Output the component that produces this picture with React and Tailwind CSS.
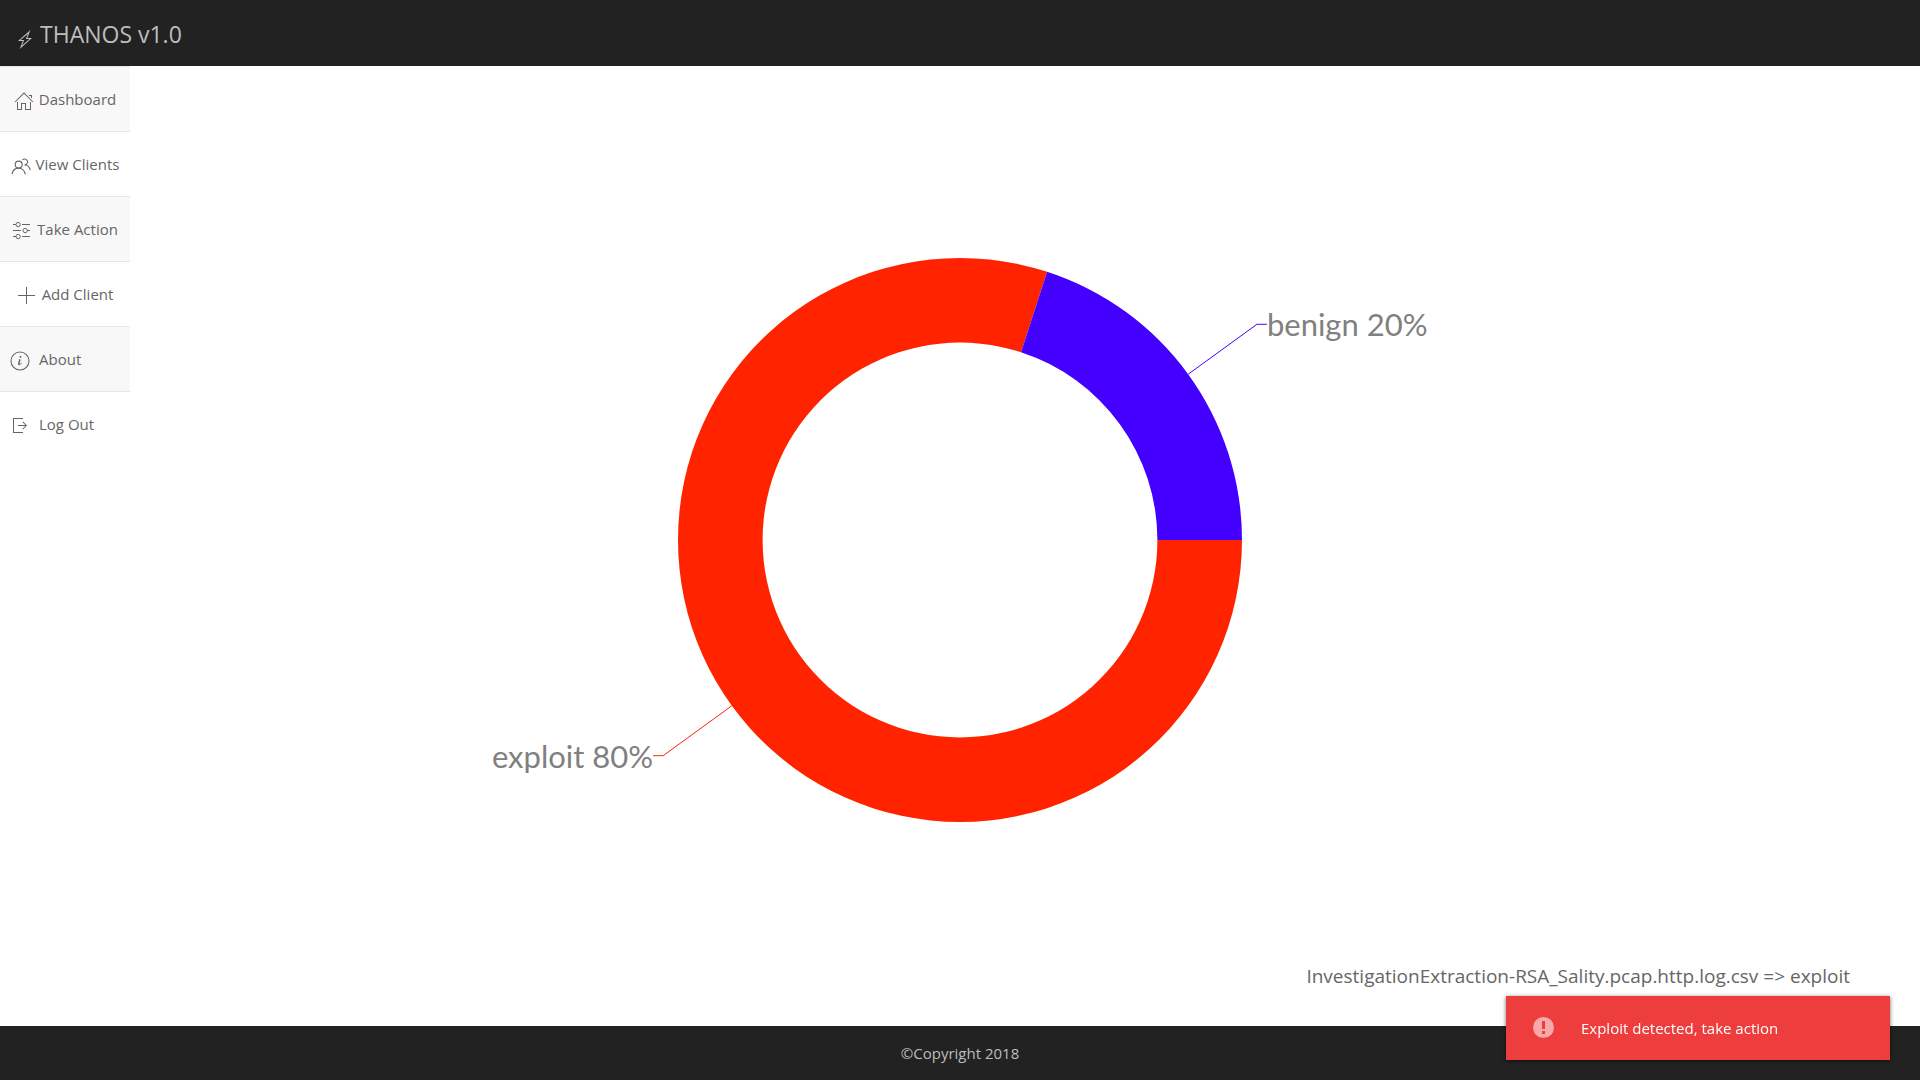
import React from "react";

function Icon({ children }) {
  return (
    <svg width="20" height="20" viewBox="0 0 20 20" fill="currentColor" className="shrink-0" aria-hidden="true">
      {children}
    </svg>
  );
}

const BoltIcon = () => (
  <Icon>
    <path d="M4.74,20 L7.73,12 L3,12 L15.43,1 L12.32,9 L17.02,9 L4.74,20 Z M9.18,11 L7.1,16.39 L14.47,10 L10.86,10 L12.99,4.67 L5.61,11 L9.18,11 Z" />
  </Icon>
);

const HomeIcon = () => (
  <Icon>
    <polygon points="18.65 11.35 10 2.71 1.35 11.35 0.65 10.65 10 1.29 19.35 10.65" />
    <polygon points="15 4 18 4 18 7 17 7 17 5 15 5" />
    <polygon points="3 11 4 11 4 18 7 18 7 12 12 12 12 18 16 18 16 11 17 11 17 19 11 19 11 13 8 13 8 19 3 19" />
  </Icon>
);

const UsersIcon = () => (
  <Icon>
    <g fill="none" stroke="currentColor" strokeWidth="1.1">
      <circle cx="7.7" cy="8.6" r="3.5" />
      <path d="M1,18.1 C1.7,14.6 4.4,12.1 7.6,12.1 C10.9,12.1 13.7,14.8 14.3,18.3" />
      <path d="M11.4,4 C12.8,2.4 15.4,2.8 16.3,4.7 C17.2,6.6 15.7,8.9 13.6,8.9 C16.5,8.9 18.8,11.3 19.2,14.1" />
    </g>
  </Icon>
);

const SettingsIcon = () => (
  <Icon>
    <g fill="none" stroke="currentColor">
      <ellipse cx="6.11" cy="3.55" rx="2.11" ry="2.15" />
      <ellipse cx="6.11" cy="15.55" rx="2.11" ry="2.15" />
      <circle cx="13.15" cy="9.55" r="2.15" />
    </g>
    <rect x="1" y="3" width="3" height="1" />
    <rect x="10" y="3" width="8" height="1" />
    <rect x="1" y="9" width="8" height="1" />
    <rect x="15" y="9" width="3" height="1" />
    <rect x="1" y="15" width="3" height="1" />
    <rect x="10" y="15" width="8" height="1" />
  </Icon>
);

const PlusIcon = () => (
  <Icon>
    <rect x="9" y="1" width="1" height="17" />
    <rect x="1" y="9" width="17" height="1" />
  </Icon>
);

const InfoIcon = () => (
  <Icon>
    <path d="M12.13,11.59 C11.97,12.84 10.35,14.12 9.1,14.16 C6.17,14.2 9.89,9.46 8.74,8.37 C9.3,8.16 10.62,7.83 10.62,8.81 C10.62,9.63 10.12,10.55 9.88,11.32 C8.66,15.16 12.13,11.15 12.14,11.18 C12.16,11.21 12.16,11.35 12.13,11.59 Z M11.56,5.67 C11.56,6.67 9.36,7.15 9.36,6.03 C9.36,5 11.56,4.54 11.56,5.67 Z" />
    <circle fill="none" stroke="currentColor" strokeWidth="1.1" cx="10" cy="10" r="9" />
  </Icon>
);

const SignOutIcon = () => (
  <Icon>
    <polygon points="13.1 13.4 12.5 12.8 15.28 10 8 10 8 9 15.28 9 12.5 6.2 13.1 5.62 17 9.5" />
    <polygon points="13 2 3 2 3 17 13 17 13 16 4 16 4 3 13 3" />
  </Icon>
);

const navItems = [
  { label: "Dashboard", icon: HomeIcon, align: "justify-center gap-[5px]" },
  { label: "View Clients", icon: UsersIcon, align: "justify-center gap-[5px]" },
  { label: "Take Action", icon: SettingsIcon, align: "justify-center gap-[5px]" },
  { label: "Add Client", icon: PlusIcon, align: "justify-center gap-[5px]" },
  { label: "About", icon: InfoIcon, align: "gap-[9px]" },
  { label: "Log Out", icon: SignOutIcon, align: "gap-[9px]" },
];

const slices = [
  { name: "exploit", percent: 80, color: "#ff2300", start: 0, end: 288 },
  { name: "benign", percent: 20, color: "#4400ff", start: 288, end: 360 },
];

const OUTER = 282;
const INNER = 197.4;

function point(radius, degrees) {
  const a = (degrees * Math.PI) / 180;
  return [radius * Math.cos(a), radius * Math.sin(a)];
}

function slicePath(start, end) {
  const large = end - start > 180 ? 1 : 0;
  const [ax, ay] = point(OUTER, start);
  const [bx, by] = point(OUTER, end);
  const [cx, cy] = point(INNER, end);
  const [dx, dy] = point(INNER, start);
  return `M${ax},${ay} A${OUTER},${OUTER} 0 ${large} 1 ${bx},${by} L${cx},${cy} A${INNER},${INNER} 0 ${large} 0 ${dx},${dy} Z`;
}

function DonutChart() {
  return (
    <svg viewBox="-480 -300 960 600" className="w-full max-w-[960px]" role="img" aria-label="Traffic classification">
      {slices.map((s) => {
        const mid = (s.start + s.end) / 2;
        const [x1, y1] = point(OUTER, mid);
        const [x2, y2] = point(367, mid);
        const side = x2 > 0 ? 1 : -1;
        return (
          <g key={s.name}>
            <path d={slicePath(s.start, s.end)} fill={s.color} />
            <polyline
              points={`${x1},${y1} ${x2},${y2} ${x2 + side * 10},${y2}`}
              fill="none"
              stroke={s.color}
              strokeWidth="1"
            />
            <text
              x={x2 + side * 10}
              y={y2 + 12}
              textAnchor={side > 0 ? "start" : "end"}
              className="fill-[#808080] font-['Lato',sans-serif] text-[31px]"
            >
              {`${s.name} ${s.percent}%`}
            </text>
          </g>
        );
      })}
    </svg>
  );
}

export default function App() {
  return (
    <div className="flex min-h-screen flex-col bg-white font-['Open_Sans',sans-serif] text-[#666666]">
      <header className="flex h-[66px] items-center gap-[5px] bg-[#222222] px-[15px] text-[#bdbdbd]">
        <span className="pt-3">
          <BoltIcon />
        </span>
        <h1 className="pt-0.5 text-[23px] leading-8">THANOS v1.0</h1>
      </header>

      <div className="grid flex-1 grid-cols-[130px_1fr]">
        <nav aria-label="Main">
          <ul>
            {navItems.map(({ label, icon: NavIcon, align }) => (
              <li key={label} className="border-t border-[#e5e5e5] odd:bg-[#f8f8f8]">
                <a href="#" className={`flex h-16 items-center px-[10px] text-[15px] whitespace-nowrap ${align}`}>
                  <span className="pt-1">
                    <NavIcon />
                  </span>
                  {label}
                </a>
              </li>
            ))}
          </ul>
        </nav>

        <main className="flex flex-col">
          <div className="flex flex-1 items-center justify-center pt-[78px] pr-[130px]">
            <DonutChart />
          </div>
          <p className="h-[90px] pt-6 pr-[70px] text-right text-[19px] leading-8">
            InvestigationExtraction-RSA_Sality.pcap.http.log.csv =&gt; exploit
          </p>
        </main>
      </div>

      <footer className="flex h-[54px] items-center justify-center bg-[#222222] text-[15px] text-[#bdbdbd]">
        ©Copyright 2018
      </footer>

      <div
        role="alert"
        className="fixed right-[30px] bottom-5 flex h-16 w-96 items-center gap-[27px] bg-[#ed3d3d] pl-[27px] text-[15px] text-white shadow-[0_1px_4px_rgba(0,0,0,0.6)]"
      >
        <span className="pb-0.5">
          <svg width="21" height="21" viewBox="0 0 21 21" className="shrink-0" aria-hidden="true">
            <circle cx="10.5" cy="10.5" r="10.5" fill="#f7a9a9" />
            <rect x="9" y="4" width="3" height="8" rx="0.5" fill="#ed3d3d" />
            <rect x="9" y="14" width="3" height="3" rx="0.5" fill="#ed3d3d" />
          </svg>
        </span>
        Exploit detected, take action
      </div>
    </div>
  );
}
